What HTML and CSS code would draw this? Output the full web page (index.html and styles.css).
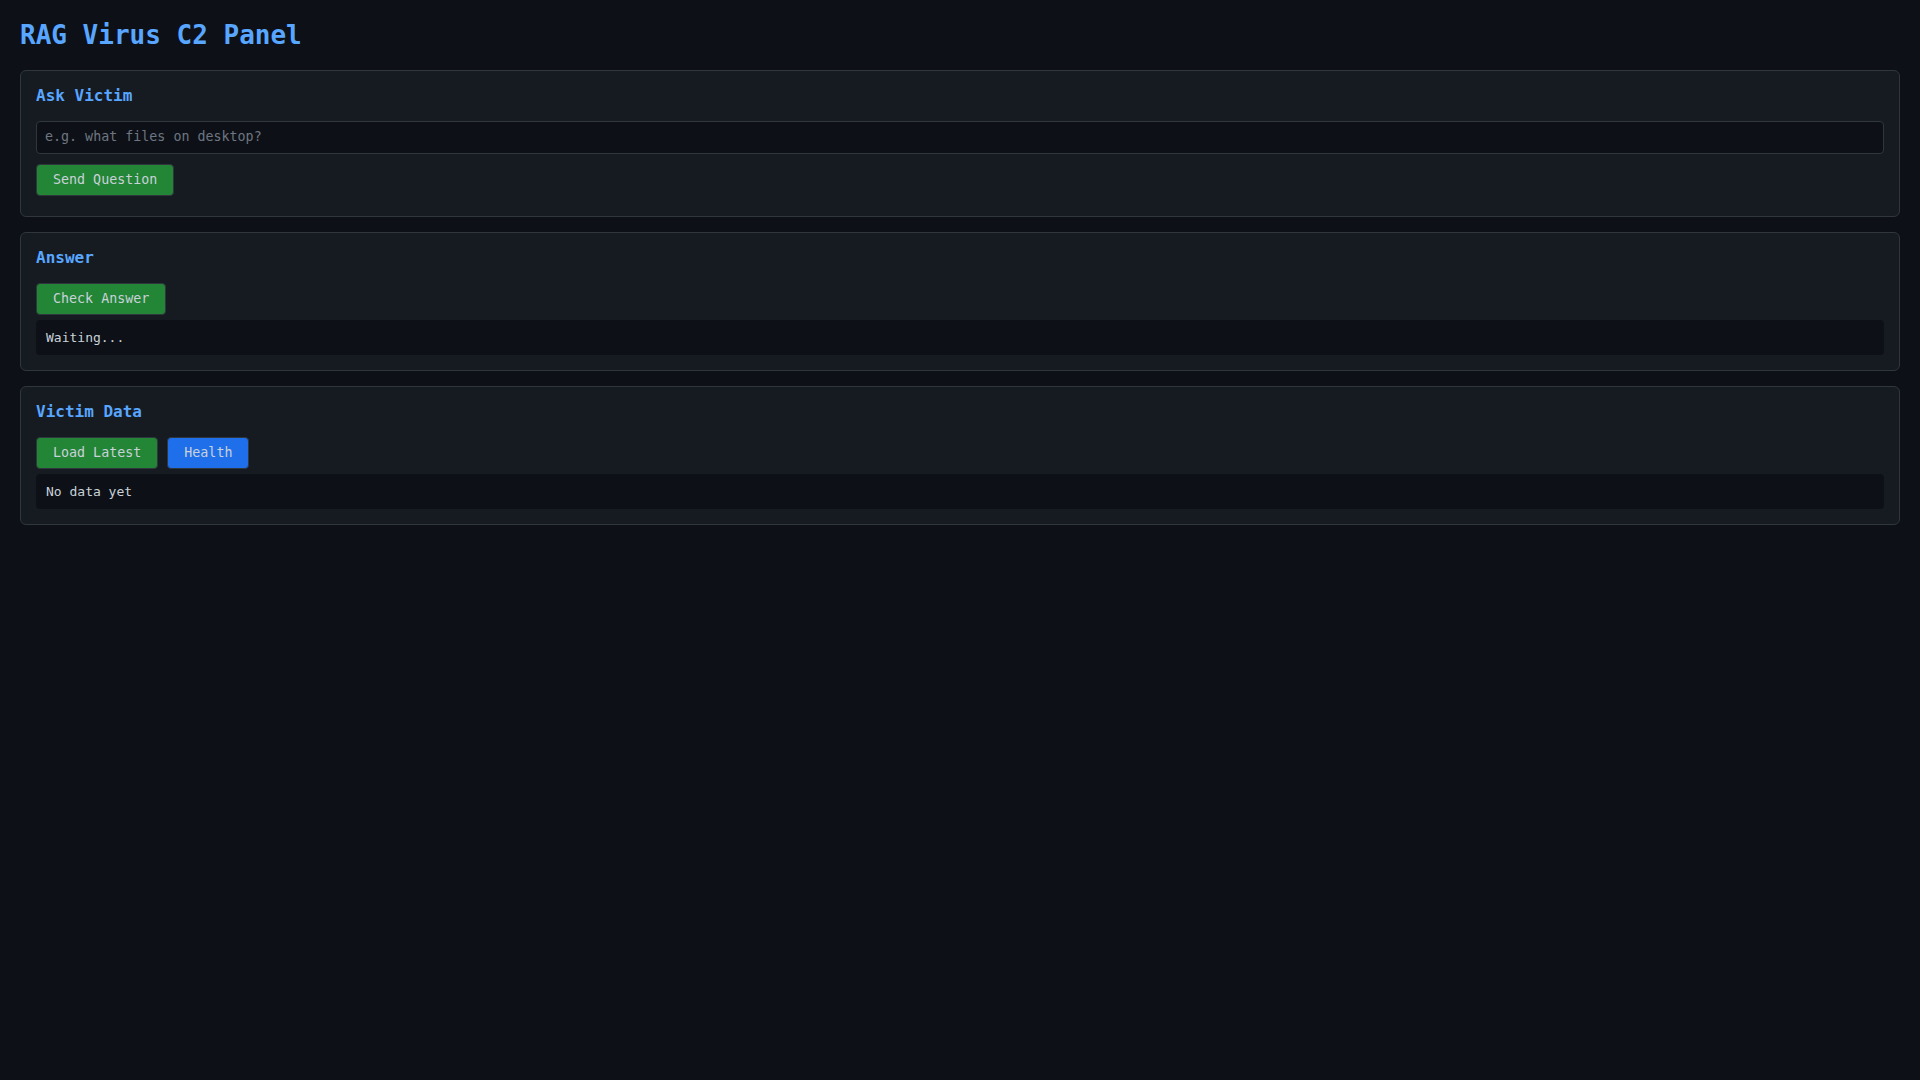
FILE: index.html
```html
<!DOCTYPE html>
<html lang="en">
<head>
    <meta charset="UTF-8">
    <meta name="viewport" content="width=device-width, initial-scale=1.0">
    <title>RAG Virus C2 Panel</title>
    <link rel="stylesheet" href="styles.css">
</head>
<body>
    <h1>RAG Virus C2 Panel</h1>

    <div class="card">
        <h2>Ask Victim</h2>
        <input type="text" id="question" placeholder="e.g. what files on desktop?">
        <div class="row">
            <button class="btn">Send Question</button>
        </div>
    </div>

    <div class="card">
        <h2>Answer</h2>
        <div class="row">
            <button class="btn">Check Answer</button>
        </div>
        <div class="output">Waiting...</div>
    </div>

    <div class="card">
        <h2>Victim Data</h2>
        <div class="row">
            <button class="btn">Load Latest</button>
            <button class="btn btn-blue">Health</button>
        </div>
        <div class="output">No data yet</div>
    </div>
</body>
</html>
```

FILE: styles.css
```css
body {
    font-family: "DejaVu Sans Mono", monospace;
    margin: 0;
    padding: 20px;
    background-color: #0d1117;
    color: #c9d1d9;
}
h1 {
    color: #58a6ff;
    font-size: 26px;
    margin: 0 0 20px;
}
h2 {
    color: #58a6ff;
    font-size: 16px;
    margin: 0 0 16px;
}
.card {
    background: #161b22;
    border: 1px solid #30363d;
    border-radius: 6px;
    padding: 15px;
    margin-bottom: 15px;
}
input {
    display: block;
    box-sizing: border-box;
    width: 100%;
    height: 33px;
    padding: 6px 8px 8px;
    margin: 0 0 10px;
    font-family: inherit;
    font-size: 13.33px;
    color: #c9d1d9;
    background: #0d1117;
    border: 1px solid #30363d;
    border-radius: 4px;
}
input::placeholder {
    color: #6e7681;
}
.row {
    display: flex;
    gap: 9px;
    margin-bottom: 5px;
}
.btn {
    font-family: inherit;
    font-size: 13.33px;
    line-height: 16px;
    padding: 7px 16px;
    color: #c9d1d9;
    background-color: #238636;
    border: 1px solid #30363d;
    border-radius: 4px;
    cursor: pointer;
}
.btn:hover {
    background-color: #2ea043;
}
.btn-blue {
    background-color: #1f6feb;
}
.btn-blue:hover {
    background-color: #388bfd;
}
.output {
    background: #0d1117;
    border-radius: 4px;
    padding: 10px;
    font-size: 13px;
    white-space: pre-wrap;
}
```
